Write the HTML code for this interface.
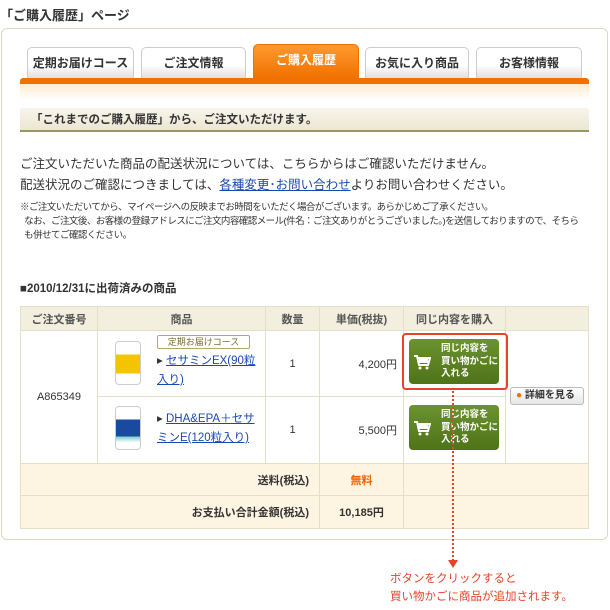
<!DOCTYPE html>
<html><head><meta charset="utf-8"><style>
*{margin:0;padding:0;box-sizing:border-box}
body{width:610px;height:610px;background:#fff;position:relative;font-family:"Liberation Sans","Noto Sans CJK JP",sans-serif;color:#333;overflow:hidden}
.a{position:absolute;white-space:nowrap}
.tab{position:absolute;top:47px;height:32px;border:1px solid #ccc;border-bottom:none;border-radius:5px 5px 0 0;background:linear-gradient(#fff,#fff 55%,#ddd);font-size:12px;font-weight:bold;text-align:center;line-height:30px;color:#333}
.tab.on{top:44px;height:35px;background:linear-gradient(#ff9a2e,#f07000);border-color:#f07000;color:#fff;line-height:30px}
table{position:absolute;left:20px;top:306px;width:569px;border-collapse:collapse;font-size:11px}
td{border:1px solid #e6dfc8;text-align:center}
.h td{background:#f3efde;height:24px;font-weight:bold;color:#555}
.g{position:absolute;left:409px;width:90px;height:45px;background:linear-gradient(#6b9330,#4e7318);border-radius:4px;color:#fff;font-size:9.5px;font-weight:bold;line-height:12.5px;padding:4px 0 0 32px;white-space:normal}
.bot{position:absolute;left:115px;width:26px;height:44px;border-radius:4px;background:#eee;border:1px solid #ccc}
a{color:#1a49b5}
</style></head><body>
<div class="a" style="left:0;top:5px;font-size:13px;font-weight:bold;color:#333">「ご購入履歴」ページ</div>
<div class="a" style="left:1px;top:28px;width:607px;height:512px;border:1px solid #ddd8bf;border-radius:6px"></div>
<div class="tab" style="left:27px;width:107px">定期お届けコース</div>
<div class="tab" style="left:141px;width:105px">ご注文情報</div>
<div class="tab on" style="left:253px;width:106px">ご購入履歴</div>
<div class="tab" style="left:365px;width:104px">お気に入り商品</div>
<div class="tab" style="left:476px;width:106px">お客様情報</div>
<div class="a" style="left:20px;top:78px;width:569px;height:6px;background:#f07000;border-radius:3px 3px 0 0"></div>
<div class="a" style="left:20px;top:84px;width:569px;height:16px;background:linear-gradient(#fdeccf,#fff)"></div>
<div class="a" style="left:20px;top:108px;width:569px;height:24px;background:linear-gradient(#f7f5ec,#ece7d2);border-bottom:2px solid #9c9560;border-radius:3px 3px 0 0;font-size:11.5px;font-weight:bold;line-height:24px;padding-left:11px">「これまでのご購入履歴」から、ご注文いただけます。</div>
<div class="a" style="left:20px;top:154px;font-size:12.5px;line-height:21px">ご注文いただいた商品の配送状況については、こちらからはご確認いただけません。<br>配送状況のご確認につきましては、<a href="#">各種変更･お問い合わせ</a>よりお問い合わせください。</div>
<div class="a" style="left:20px;top:201px;font-size:9.5px;line-height:14px;letter-spacing:-0.55px">※ご注文いただいてから、マイページへの反映までお時間をいただく場合がございます。あらかじめご了承ください。<br>&nbsp;&nbsp;なお、ご注文後、お客様の登録アドレスにご注文内容確認メール(件名：ご注文ありがとうございました。)を送信しておりますので、そちら<br>&nbsp;&nbsp;も併せてご確認ください。</div>
<div class="a" style="left:20px;top:280px;font-size:11.5px;font-weight:bold">■2010/12/31に出荷済みの商品</div>
<table>
<tr class="h"><td style="width:77px">ご注文番号</td><td style="width:168px">商品</td><td style="width:54px">数量</td><td style="width:84px">単価(税抜)</td><td style="width:102px">同じ内容を購入</td><td style="background:#f3efde"></td></tr>
<tr style="height:66px"><td rowspan="2">A865349</td><td></td><td>1</td><td style="text-align:right;padding-right:6px">4,200円</td><td></td><td rowspan="2"></td></tr>
<tr style="height:67px"><td></td><td>1</td><td style="text-align:right;padding-right:6px">5,500円</td><td></td></tr>
<tr style="height:32px;background:#fdf4e2"><td colspan="3" style="text-align:right;padding-right:10px;font-weight:bold">送料(税込)</td><td style="color:#f06000;font-weight:bold">無料</td><td colspan="2"></td></tr>
<tr style="height:33px;background:#fdf4e2"><td colspan="3" style="text-align:right;padding-right:10px;font-weight:bold">お支払い合計金額(税込)</td><td style="font-weight:bold">10,185円</td><td colspan="2"></td></tr>
</table>
<div class="bot" style="top:341px;background:linear-gradient(#fff 30%,#f5c400 30%,#f5c400 75%,#fff 75%)"></div>
<div class="bot" style="top:406px;background:linear-gradient(#fff 30%,#1a4aa0 30%,#1a4aa0 70%,#7cc 70%,#fff 85%)"></div>
<div class="a" style="left:157px;top:335px;width:93px;height:14px;border:1px solid #b5a66a;border-radius:2px;font-size:9px;text-align:center;line-height:12px;color:#7a6a30">定期お届けコース</div>
<div class="a" style="left:157px;top:352px;font-size:11.5px;line-height:19px;white-space:normal;width:100px">▸ <a href="#">セサミンEX(90粒入り)</a></div>
<div class="a" style="left:157px;top:410px;font-size:11.5px;line-height:19px;white-space:normal;width:103px">▸ <a href="#">DHA&amp;EPA＋セサミンE(120粒入り)</a></div>
<div class="a" style="left:402px;top:333px;width:106px;height:57px;border:2px solid #e8432a;border-radius:4px"></div>
<div class="g" style="top:339px">同じ内容を<br>買い物かごに<br>入れる</div>
<div class="g" style="top:405px">同じ内容を<br>買い物かごに<br>入れる</div>
<svg class="a" style="left:413px;top:353px" width="18" height="18" viewBox="0 0 18 18"><path d="M1 3h3l2 9h9l2-7H5" fill="none" stroke="#fff" stroke-width="2"/><rect x="6" y="6" width="9" height="4" fill="#fff"/><circle cx="7" cy="15" r="1.5" fill="#fff"/><circle cx="14" cy="15" r="1.5" fill="#fff"/></svg>
<svg class="a" style="left:413px;top:419px" width="18" height="18" viewBox="0 0 18 18"><path d="M1 3h3l2 9h9l2-7H5" fill="none" stroke="#fff" stroke-width="2"/><rect x="6" y="6" width="9" height="4" fill="#fff"/><circle cx="7" cy="15" r="1.5" fill="#fff"/><circle cx="14" cy="15" r="1.5" fill="#fff"/></svg>
<div class="a" style="left:510px;top:387px;width:74px;height:18px;border:1px solid #bbb;border-radius:3px;background:linear-gradient(#fff,#e6e6e6);font-size:10px;font-weight:bold;line-height:16px;padding-left:5px"><span style="color:#f07000">●</span> 詳細を見る</div>
<div class="a" style="left:452px;top:391px;height:170px;border-left:2px dotted #e8432a"></div>
<div class="a" style="left:448px;top:560px;width:0;height:0;border-left:5px solid transparent;border-right:5px solid transparent;border-top:8px solid #e8432a"></div>
<div class="a" style="left:390px;top:570px;font-size:11.5px;line-height:18px;color:#e8432a">ボタンをクリックすると<br>買い物かごに商品が追加されます。</div>
</body></html>
